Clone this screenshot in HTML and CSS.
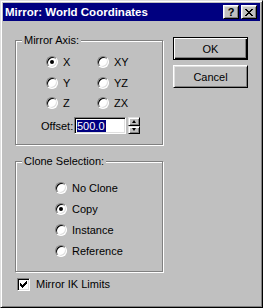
FILE: index.html
```html
<!DOCTYPE html>
<html lang="en">

<head>
    <meta charset="UTF-8">
    <title>Mirror: World Coordinates</title>
    <link rel="stylesheet" href="styles.css">
</head>

<body>

    <div class="window">
        <div class="titlebar">
            <span class="title">Mirror: World Coordinates</span>
            <div class="caption-btns">
                <span class="cap-btn help">?</span>
                <span class="cap-btn">
                    <svg width="8" height="7" viewBox="0 0 8 7" shape-rendering="crispEdges">
                        <path d="M0 0h2v1h-2zM6 0h2v1h-2zM1 1h2v1h-2zM5 1h2v1h-2zM2 2h4v1h-4zM3 3h2v1h-2zM2 4h4v1h-4zM1 5h2v1h-2zM5 5h2v1h-2zM0 6h2v1h-2zM6 6h2v1h-2z" fill="#000"/>
                    </svg>
                </span>
            </div>
        </div>

        <div class="client">
            <div class="main">
                <div class="group axis">
                    <span class="group-title">Mirror Axis:</span>
                    <div class="group-body">
                        <div class="axis-grid">
                            <label class="radio checked"><span class="circle"></span>X</label>
                            <label class="radio"><span class="circle"></span>XY</label>
                            <label class="radio"><span class="circle"></span>Y</label>
                            <label class="radio"><span class="circle"></span>YZ</label>
                            <label class="radio"><span class="circle"></span>Z</label>
                            <label class="radio"><span class="circle"></span>ZX</label>
                        </div>
                        <div class="offset-row">
                            <span class="offset-label">Offset:</span>
                            <div class="edit"><span class="sel">500.0</span></div>
                            <div class="spinner">
                                <span class="spin up"></span>
                                <span class="spin down"></span>
                            </div>
                        </div>
                    </div>
                </div>

                <div class="group clone">
                    <span class="group-title">Clone Selection:</span>
                    <div class="group-body clone-list">
                        <label class="radio"><span class="circle"></span>No Clone</label>
                        <label class="radio checked"><span class="circle"></span>Copy</label>
                        <label class="radio"><span class="circle"></span>Instance</label>
                        <label class="radio"><span class="circle"></span>Reference</label>
                    </div>
                </div>

                <label class="check">
                    <span class="box">
                        <svg width="7" height="7" viewBox="0 0 7 7" shape-rendering="crispEdges">
                            <path d="M6 0h1v1h-1zM5 1h2v1h-2zM0 2h1v1h-1zM4 2h3v1h-3zM0 3h2v1h-2zM3 3h3v1h-3zM0 4h5v1h-5zM1 5h3v1h-3zM2 6h1v1h-1z" fill="#000"/>
                        </svg>
                    </span>
                    Mirror IK Limits
                </label>
            </div>

            <div class="side">
                <button class="btn default">OK</button>
                <button class="btn">Cancel</button>
            </div>
        </div>
    </div>

</body>

</html>
```

FILE: styles.css
```css
body {
    margin: 0;
    font-family: "Liberation Sans", Arial, sans-serif;
    font-size: 11px;
    color: #000;
    background-color: #c0c0c0;
}

.window {
    width: 263px;
    height: 308px;
    box-sizing: border-box;
    border: 1px solid;
    border-color: #dfdfdf #000 #000 #dfdfdf;
    box-shadow: inset 1px 1px #fff, inset -1px -1px #808080;
    padding: 2px;
    background-color: #c0c0c0;
}

.titlebar {
    height: 18px;
    background-color: #000080;
    display: flex;
    align-items: center;
    justify-content: space-between;
    padding: 0 3px 0 2px;
}

.title {
    color: #fff;
    font-weight: bold;
    font-size: 11.5px;
    line-height: 18px;
}

.caption-btns {
    display: flex;
    gap: 2px;
}

.cap-btn {
    width: 16px;
    height: 14px;
    box-sizing: border-box;
    border: 1px solid;
    border-color: #fff #000 #000 #fff;
    box-shadow: inset 1px 1px #dfdfdf, inset -1px -1px #808080;
    background-color: #c0c0c0;
    display: flex;
    align-items: center;
    justify-content: center;
}

.cap-btn.help {
    font-weight: bold;
    font-size: 11px;
    line-height: 12px;
}

.client {
    display: flex;
}

.main {
    width: 148px;
    margin: 19px 0 0 12px;
}

/* etched group box, title sits on the top line */
.group {
    width: 148px;
    box-sizing: border-box;
    border: 1px solid #808080;
    box-shadow: inset 1px 1px #fff, 1px 1px #fff;
}

.group-title {
    display: block;
    width: fit-content;
    margin: -7px 0 0 6px;
    padding: 0 2px;
    line-height: 13px;
    background-color: #c0c0c0;
}

.axis .group-body {
    padding: 9px 0 10px 25px;
}

.axis-grid {
    display: grid;
    grid-template-columns: 51px 51px;
    grid-auto-rows: 12px;
    row-gap: 8.5px;
    margin-left: 5px;
}

.radio {
    display: flex;
    align-items: center;
    gap: 5px;
    height: 12px;
    line-height: 12px;
}

.circle {
    width: 12px;
    height: 12px;
    box-sizing: border-box;
    border-radius: 50%;
    border: 1px solid;
    border-color: #808080 #fff #fff #808080;
    box-shadow: inset 1px 1px #000, inset -1px -1px #dfdfdf;
    background-color: #fff;
    display: flex;
    align-items: center;
    justify-content: center;
    flex: none;
}

.radio.checked .circle::after {
    content: "";
    width: 4px;
    height: 4px;
    border-radius: 50%;
    background-color: #000;
}

.offset-row {
    display: flex;
    align-items: center;
    margin-top: 8px;
}

.offset-label {
    width: 33px;
}

.edit {
    width: 52px;
    height: 17px;
    box-sizing: border-box;
    border: 1px solid;
    border-color: #808080 #fff #fff #808080;
    box-shadow: inset 1px 1px #000, inset -1px -1px #dfdfdf;
    background-color: #fff;
    padding: 2px 0 0 2px;
}

.sel {
    display: inline-block;
    height: 12px;
    line-height: 12px;
    width: 29px;
    background-color: #000080;
    color: #fff;
    overflow: hidden;
    white-space: nowrap;
}

.spinner {
    margin-left: 2px;
    width: 12px;
    height: 17px;
    display: flex;
    flex-direction: column;
}

.spin {
    height: 8.5px;
    box-sizing: border-box;
    border: 1px solid;
    border-color: #dfdfdf #000 #000 #dfdfdf;
    box-shadow: inset 1px 1px #fff, inset -1px -1px #808080;
    background-color: #c0c0c0;
    display: flex;
    align-items: center;
    justify-content: center;
}

.spin::after {
    content: "";
    border-left: 2.5px solid transparent;
    border-right: 2.5px solid transparent;
}

.spin.up::after {
    border-bottom: 3px solid #000;
}

.spin.down::after {
    border-top: 3px solid #000;
}

.clone {
    margin-top: 16px;
}

.clone-list {
    display: flex;
    flex-direction: column;
    gap: 9px;
    padding: 14px 0 14px 39px;
}

.check {
    display: flex;
    align-items: center;
    gap: 6px;
    margin: 6px 0 0 2px;
    line-height: 13px;
}

.box {
    width: 13px;
    height: 13px;
    box-sizing: border-box;
    border: 1px solid;
    border-color: #808080 #fff #fff #808080;
    box-shadow: inset 1px 1px #000, inset -1px -1px #dfdfdf;
    background-color: #fff;
    display: flex;
    align-items: center;
    justify-content: center;
}

.side {
    display: flex;
    flex-direction: column;
    gap: 5px;
    margin: 16px 0 0 10px;
}

.btn {
    width: 75px;
    height: 23px;
    box-sizing: border-box;
    font: inherit;
    color: #000;
    padding: 0;
    border: 1px solid;
    border-color: #fff #000 #000 #fff;
    box-shadow: inset 1px 1px #dfdfdf, inset -1px -1px #808080;
    background-color: #c0c0c0;
}

.btn.default {
    border-color: #000;
    box-shadow: inset 1px 1px #fff, inset -1px -1px #000, inset -2px -2px #808080;
}
```
